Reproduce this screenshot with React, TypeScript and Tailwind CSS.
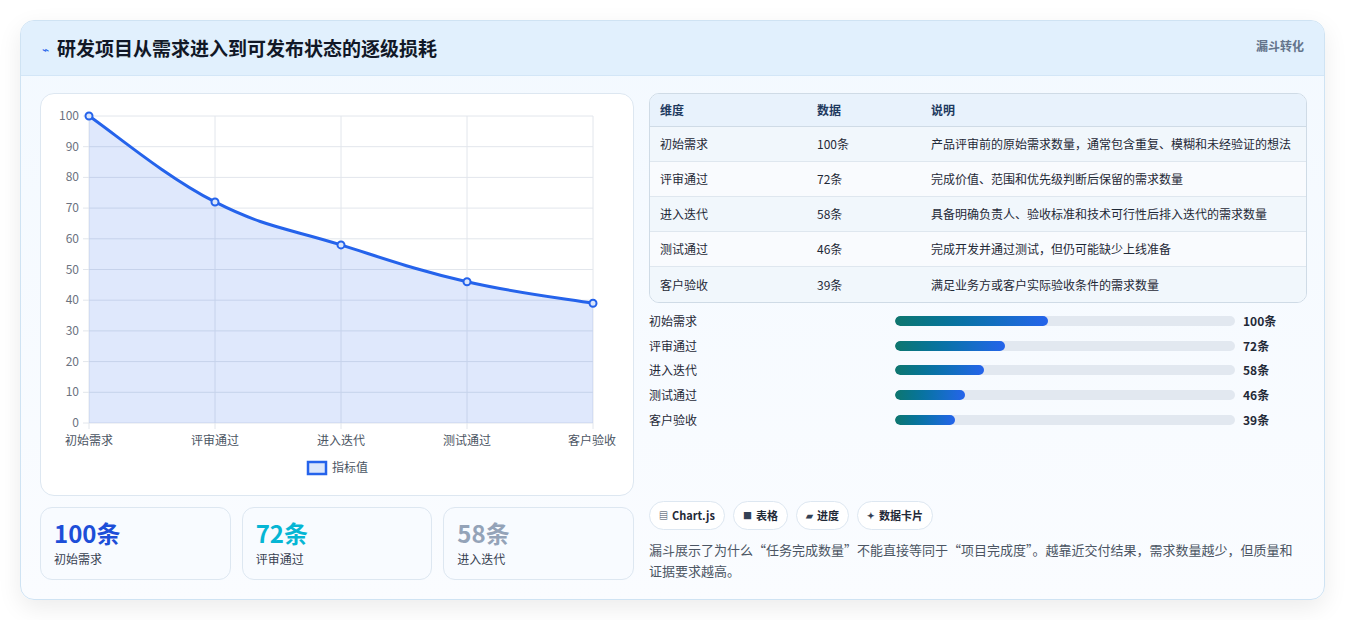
import React from "react";

const rows = [
  ["初始需求", 100, "产品评审前的原始需求数量，通常包含重复、模糊和未经验证的想法"],
  ["评审通过", 72, "完成价值、范围和优先级判断后保留的需求数量"],
  ["进入迭代", 58, "具备明确负责人、验收标准和技术可行性后排入迭代的需求数量"],
  ["测试通过", 46, "完成开发并通过测试，但仍可能缺少上线准备"],
  ["客户验收", 39, "满足业务方或客户实际验收条件的需求数量"],
] as const;

function Chart() {
  const x0 = 48, x1 = 552, yTop = 22, yBot = 329;
  const W = 593;
  const px = (i: number) => x0 + (i * (x1 - x0)) / 4;
  const py = (v: number) => yBot - (v / 100) * (yBot - yTop);
  const pts = rows.map((r, i) => [px(i), py(r[1])]);
  let d = `M${pts[0][0]},${pts[0][1]}`;
  for (let i = 0; i < pts.length - 1; i++) {
    const p0 = pts[i - 1] || pts[i], p1 = pts[i], p2 = pts[i + 1], p3 = pts[i + 2] || p2;
    const t = 0.4 / 2;
    const c1 = [p1[0] + (p2[0] - p0[0]) * t, p1[1] + (p2[1] - p0[1]) * t];
    const c2 = [p2[0] - (p3[0] - p1[0]) * t, p2[1] - (p3[1] - p1[1]) * t];
    d += ` C${c1[0]},${c1[1]} ${c2[0]},${c2[1]} ${p2[0]},${p2[1]}`;
  }
  const area = d + ` L${x1},${yBot} L${x0},${yBot} Z`;
  return (
    <svg width={W} height={400} className="block">
      {[0, 10, 20, 30, 40, 50, 60, 70, 80, 90, 100].map((v) => (
        <g key={v}>
          <line x1={x0 - 6} x2={x1} y1={py(v)} y2={py(v)} stroke="#e2e6ec" />
          <text x={x0 - 10} y={py(v) + 4} textAnchor="end" fontSize="12" fill="#6b7280">{v}</text>
        </g>
      ))}
      {rows.map((r, i) => (
        <g key={i}>
          <line x1={px(i)} x2={px(i)} y1={yTop} y2={yBot + 6} stroke="#e2e6ec" />
          <text x={Math.min(px(i), W - 42)} y={351} textAnchor="middle" fontSize="12" fill="#4b5563">{r[0]}</text>
        </g>
      ))}
      <path d={area} fill="rgba(37,99,235,0.15)" />
      <path d={d} fill="none" stroke="#2563eb" strokeWidth="3" />
      {pts.map((p, i) => (
        <circle key={i} cx={p[0]} cy={p[1]} r="3.5" fill="#dbe6fb" stroke="#2563eb" strokeWidth="2" />
      ))}
      <rect x={267} y={368} width={18} height={12} fill="#dbe6fb" stroke="#2563eb" strokeWidth="2.5" />
      <text x={291} y={378} fontSize="12" fill="#4b5563">指标值</text>
    </svg>
  );
}

export default function App() {
  const font = { fontFamily: '"Noto Sans CJK SC", "Noto Sans", sans-serif' };
  return (
    <div className="w-[1345px] h-[620px] bg-white pt-[20px] px-[20px]" style={font}>
      <div className="h-[580px] rounded-[14px] border border-[#cfe3f3] bg-gradient-to-b from-[#f3f9ff] to-[#fafcff] shadow-[0_8px_24px_rgba(0,0,0,0.08)] overflow-hidden">
        <div className="h-[55px] bg-[#e1f0fd] border-b border-[#d3e6f7] flex items-start justify-between pl-[21px] pr-[20px]">
          <div className="flex items-center gap-[8px] h-[55px]">
            <span className="text-[#2563eb] text-[12px]">⌁</span>
            <span className="text-[19px] font-bold text-[#111827]">研发项目从需求进入到可发布状态的逐级损耗</span>
          </div>
          <span className="text-[12px] font-bold text-[#64748b] mt-[16px]">漏斗转化</span>
        </div>
        <div className="flex gap-[15px] pl-[19px] pr-[17px] pt-[17px]">
          <div className="w-[594px] flex flex-col gap-[11px]">
            <div className="h-[403px] rounded-[14px] border border-[#dde7f1] bg-white overflow-hidden">
              <Chart />
            </div>
            <div className="grid grid-cols-3 gap-[11px]">
              {[["100条", "初始需求", "text-[#1d4ed8]"], ["72条", "评审通过", "text-[#06b6d4]"], ["58条", "进入迭代", "text-[#94a3b8]"]].map(([v, l, c]) => (
                <div key={l} className="h-[73px] rounded-[12px] border border-[#dde7f1] bg-[#f8fbff] px-[13px] pt-[10px]">
                  <div className={`text-[24px] font-bold leading-[30px] ${c}`}>{v}</div>
                  <div className="text-[12px] text-[#374151] mt-[2px]">{l}</div>
                </div>
              ))}
            </div>
          </div>
          <div className="flex-1 flex flex-col">
            <div className="rounded-[10px] border border-[#cfdbe6] overflow-hidden text-[12px] text-[#1f2937]">
              <div className="flex h-[33px] items-center bg-[#e8f2fc] font-bold text-[#1e3a5f] border-b border-[#cfdbe6]">
                <div className="w-[157px] pl-[10px]">维度</div>
                <div className="w-[114px] pl-[10px]">数据</div>
                <div className="flex-1 pl-[10px]">说明</div>
              </div>
              {rows.map((r, i) => (
                <div key={i} className={`flex h-[35px] items-center ${i % 2 ? "bg-[#f9fbfe]" : "bg-[#f1f7fc]"} ${i < 4 ? "border-b border-[#dfe7ef]" : ""}`}>
                  <div className="w-[157px] pl-[10px]">{r[0]}</div>
                  <div className="w-[114px] pl-[10px]">{r[1]}条</div>
                  <div className="flex-1 pl-[10px] whitespace-nowrap">{r[2]}</div>
                </div>
              ))}
            </div>
            <div className="flex flex-col gap-[6.7px] mt-[9px]">
              {rows.map((r) => (
                <div key={r[0]} className="flex items-center h-[18px] text-[12px]">
                  <div className="w-[246px] text-[#1f2937]">{r[0]}</div>
                  <div className="w-[340px] h-[10px] rounded-full bg-[#e2e8f0] overflow-hidden">
                    <div className="h-full rounded-full bg-gradient-to-r from-[#0f766e] to-[#2563eb]" style={{ width: `${r[1] * 0.45}%` }} />
                  </div>
                  <div className="ml-[8px] font-bold text-[#1f2937]">{r[1]}条</div>
                </div>
              ))}
            </div>
            <div className="flex gap-[8px] mt-[72px]">
              {[["▤", "Chart.js"], ["■", "表格"], ["▰", "进度"], ["✦", "数据卡片"]].map(([ic, t]) => (
                <div key={t} className="h-[29px] px-[9px] rounded-full border border-[#dde7f1] bg-white flex items-center gap-[4px] text-[11px] font-bold text-[#1f2937]">
                  <span className="text-[9px] text-[#334155]">{ic}</span>{t}
                </div>
              ))}
            </div>
            <p className="mt-[9px] text-[13px] leading-[21px] text-[#4b5563] pr-[4px]">
              漏斗展示了为什么“任务完成数量”不能直接等同于“项目完成度”。越靠近交付结果，需求数量越少，但质量和证据要求越高。
            </p>
          </div>
        </div>
      </div>
    </div>
  );
}
